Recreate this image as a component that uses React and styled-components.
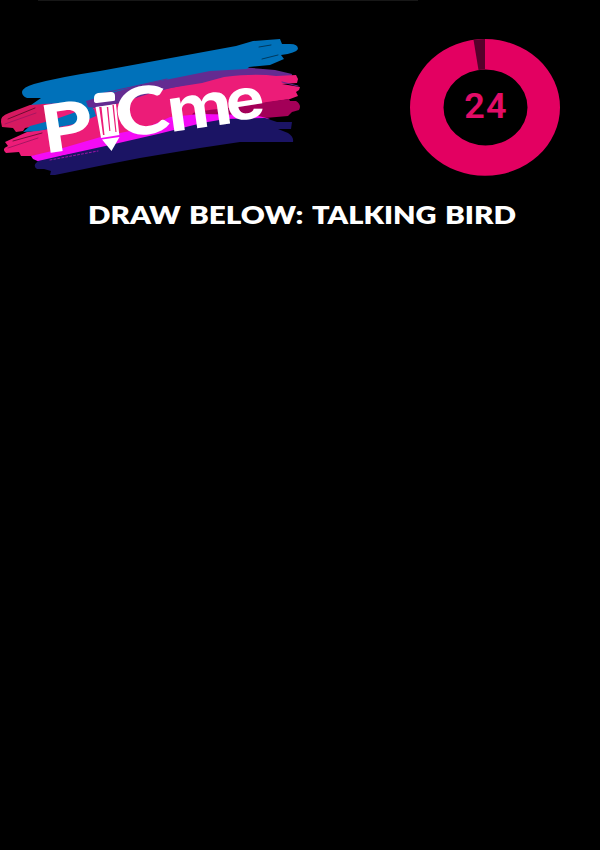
import React from "react";
import styled, { createGlobalStyle } from "styled-components";

const GlobalStyle = createGlobalStyle`
  body { margin: 0; background: #000; }
`;

const Screen = styled.main`
  box-sizing: border-box;
  width: 600px;
  height: 850px;
  background: #000;
  display: flex;
  flex-direction: column;
  overflow: hidden;
`;

const TopLine = styled.div`
  width: 380px;
  height: 1px;
  margin-left: 38px;
  background: #171717;
`;

const Header = styled.header`
  display: flex;
  justify-content: space-between;
  height: 189px;
  padding-right: 40px;
`;

const Logo = styled.svg`
  display: block;
  width: 302px;
  height: 189px;
`;

const Letter = styled.text`
  font-family: ${(p) => p.$family || "Lato"}, sans-serif;
  font-weight: ${(p) => p.$weight || 900};
  fill: #fff;
`;

const Timer = styled.div`
  display: grid;
  width: 150px;
  height: 137px;
  margin-top: 38px;
  place-items: center;
  & > * { grid-area: 1 / 1; }
`;

const Ring = styled.svg`
  display: block;
  width: 150px;
  height: 137px;
`;

const Seconds = styled.span`
  font: 600 35px/40px Roboto, sans-serif;
  letter-spacing: 1px;
  color: #e20c67;
  transform: translate(1px, -1px) scaleX(1.03);
`;

const Prompt = styled.h1`
  display: flex;
  height: 30px;
  margin: 10px 0 0 88px;
  font: 800 24.5px/30px Lato, sans-serif;
  color: #fff;
`;

const Word = styled.span`
  flex: 0 0 ${(p) => p.$width}px;
  white-space: nowrap;
  transform: scaleX(${(p) => p.$stretch});
  transform-origin: left center;
`;

const words = [
  ["DRAW", 101, 1.205],
  ["BELOW:", 123, 1.21],
  ["TALKING", 133, 1.185],
  ["BIRD", 72, 1.21],
];

function PicmeLogo() {
  return (
    <Logo viewBox="0 1 302 189" aria-label="Piicme">
      <path fill="#642b91" d="M80 96L140 80L190 72L240 67L275 70L292 74L291 80L240 88L160 110L80 120Z" />
      <path fill="#0071ba" d="M22 92Q23 87 34 84Q60 77 100 71Q160 60 236 46L253 41L280 39L282 44L290 44Q298 44 298 49Q296 53 281 55L284 59L270 65L249 67L247 69L210 71L170 79L140 85L115 92L98 101L91 112L40 124L31 105L41 98L27 98Q22 96 22 92Z" />
      <path fill="#ec1c78" d="M42 104L70 103L88 113L96 106L120 103L145 95L170 88L202 83L224 77Q255 73 276 76L296 75L298 79L297 83L282 84L300 87L299 90L296 92L298 96L290 99L240 107L170 130L70 150L55 153L33 156L21 156L19 152L6 153Q1 149 8 146L5 142L27 132L60 127L33 119Z" />
      <path fill="#d71960" d="M1 122Q0 116 9 113L30 105L45 104L48 124L25 128L23 131L16 132L13 128L2 127Z" />
      <path fill="#0071ba" d="M23 132L30 126L53 120L76 112L94 109L96 116L80 123L38 131Z" />
      <path fill="#642b91" d="M86 101L120 91L120 103L96 108L88 107Z" />
      <path fill="#a30058" d="M193 113Q210 109 231 108L267 102L289 99L290 101L296 101Q302 105 299 110L292 112L288 116L265 118L190 121Z" />
      <path fill="#f40bf5" d="M33 159L31 156L56 150L104 136L146 128L170 117L200 114L255 115L270 119L240 125L150 140L61 156L42 163Z" />
      <path fill="#1b1464" d="M38 161L60 156L110 145L158 134L202 123L225 119L265 118L277 122L292 122L291 129L278 129L288 133Q294 137 293 142L265 142L240 142L200 148L140 158L99 166L55 175L50 175L51 171L44 169L37 169Q32 166 38 161Z" />
      <g fill="none" strokeLinecap="round">
        <path stroke="#000" d="M8 119L35 108M13 141L42 133M278 55L262 59M259 47L271 45" strokeWidth=".5" />
        <path stroke="#642b91" d="M282 82L298 86M104 93L167 79M120 99L205 80" strokeWidth="1" />
        <path stroke="#a81562" d="M5 124L36 113M8 148L38 138" strokeWidth="1" />
        <path stroke="#c211b7" strokeDasharray="2 2" d="M50 160L98 151" strokeWidth=".8" />
      </g>
      <Letter $family="Inter" $weight={700} fontSize="66" transform="translate(45.5 153.5) rotate(-8.5) scale(1.22 1)">P</Letter>
      <Letter fontSize="66" transform="translate(119 138.5) rotate(-9) scale(1.22 1)">C</Letter>
      <Letter $family="Inter" $weight={700} fontSize="60" transform="translate(170 132) rotate(-8) scale(1.19 1)">m</Letter>
      <Letter $family="Inter" $weight={700} fontSize="56" transform="translate(228.5 122) rotate(-9) scale(1.16 1)">e</Letter>
      <g fill="#fff">
        <path d="M94 98Q94 94 98 93L111 92Q115 92 115 96L115 100Q115 101 113 101L97 103Q94 103 94 101Z" />
        <path fillRule="evenodd" d="M95.5 107L116 104L119.3 135L101 138ZM99.2 107L103 135L104.5 135L101.5 107ZM106.8 107L109.3 131L110.4 131L108.2 107ZM112.4 105L115.4 132L116.5 132L113.8 105Z" />
        <path d="M102 139.5L119.5 137L111.5 151Z" />
      </g>
    </Logo>
  );
}

function Countdown() {
  return (
    <Timer>
      <Ring viewBox="410 39 150 137">
        <path fill="#e30061" fillRule="evenodd" d="M410 107.4a75 68.4 0 1 0 150 0a75 68.4 0 1 0-150 0M443.5 107.4a42 38 0 1 0 84 0a42 38 0 1 0-84 0" />
        <path fill="#55002b" d="M473.5 39.7L485 39L485 69.4L478.5 70Z" />
      </Ring>
      <Seconds>24</Seconds>
    </Timer>
  );
}

export default function App() {
  return (
    <Screen>
      <GlobalStyle />
      <TopLine />
      <Header>
        <PicmeLogo />
        <Countdown />
      </Header>
      <Prompt>
        {words.map(([text, width, stretch]) => (
          <Word key={text} $width={width} $stretch={stretch}>{text}</Word>
        ))}
      </Prompt>
    </Screen>
  );
}
